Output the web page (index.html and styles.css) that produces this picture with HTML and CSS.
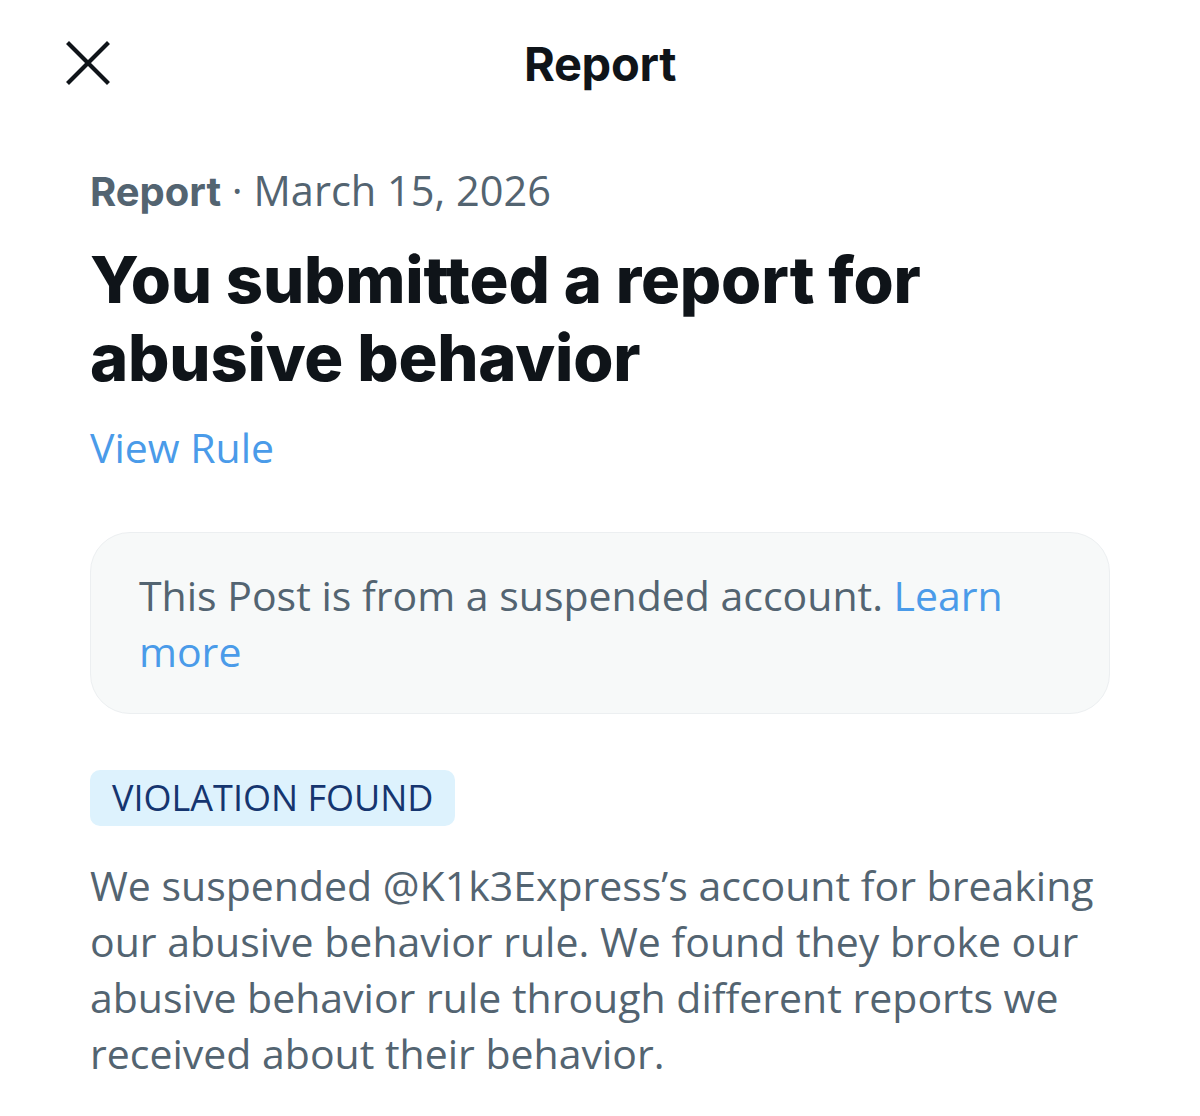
FILE: index.html
```html
<!DOCTYPE html>
<html lang="en">
<head>
<meta charset="UTF-8" />
<meta name="viewport" content="width=device-width, initial-scale=1.0"/>
<title>Report</title>
<link rel="stylesheet" href="styles.css">
</head>
<body>
<div class="topbar">
<div class="close">
<svg width="44" height="44" viewBox="0 0 44 44"><path d="M3 3 L41 41 M41 3 L3 41" stroke="#0f1419" stroke-width="4.2" stroke-linecap="square" fill="none"/></svg>
</div>
<div class="topbar-title">Report</div>
<div></div>
</div>
<div class="content">
<div class="meta"><span class="meta-strong">Report</span> · March 15, 2026</div>
<h1 class="headline">You submitted a report for abusive behavior</h1>
<a class="link view-rule" href="#">View Rule</a>
<div class="notice">This Post is from a suspended account. <a class="link" href="#">Learn more</a></div>
<div class="badge">VIOLATION FOUND</div>
<p class="body-text">We suspended @K1k3Express’s account for breaking our abusive behavior rule. We found they broke our abusive behavior rule through different reports we received about their behavior.</p>
</div>
</body>
</html>
```

FILE: styles.css
```css
body {
  margin: 0;
  background: #ffffff;
  font-family: "Open Sans", "Liberation Sans", sans-serif;
  color: #0f1419;
}
.topbar {
  display: grid;
  grid-template-columns: 1fr auto 1fr;
  align-items: center;
  height: 126px;
  padding: 0 66px;
}
.close {
  width: 44px;
  height: 44px;
}
.topbar-title {
  font-family: "Inter", "Liberation Sans", sans-serif;
  font-weight: 700;
  font-size: 47px;
  letter-spacing: -0.3px;
}
.content {
  padding: 29px 90px 0 90px;
}
.meta {
  font-size: 41.5px;
  color: #536471;
  line-height: 70px;
}
.meta-strong {
  font-family: "Inter", "Liberation Sans", sans-serif;
  font-weight: 700;
  font-size: 40px;
}
.headline {
  margin: 14px 0 0 0;
  font-family: "Inter", "Liberation Sans", sans-serif;
  font-weight: 800;
  font-size: 65px;
  line-height: 78px;
  letter-spacing: -0.2px;
  max-width: 900px;
}
.link {
  color: #4a9be9;
  text-decoration: none;
}
.view-rule {
  display: block;
  margin-top: 22px;
  font-size: 41px;
  line-height: 56px;
}
.notice {
  margin-top: 57px;
  background: #f7f9f9;
  border: 1px solid #eceff1;
  border-radius: 40px;
  padding: 34px 48px 34px 48px;
  font-size: 41px;
  line-height: 56px;
  color: #536471;
}
.badge {
  display: inline-block;
  margin-top: 56px;
  background: #ddf2fd;
  color: #15356f;
  border-radius: 10px;
  padding: 0 22px;
  font-size: 36px;
  line-height: 56px;
}
.body-text {
  margin: 31px 0 0 0;
  font-size: 41px;
  line-height: 56px;
  color: #536471;
}
```
